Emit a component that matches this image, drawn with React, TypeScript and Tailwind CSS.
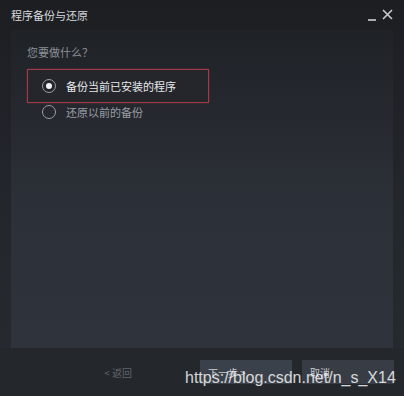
import React from 'react';

const font = { fontFamily: '"Noto Sans CJK SC", "Noto Sans", sans-serif' };

const Radio: React.FC<{ checked?: boolean }> = ({ checked }) => (
  <span className="flex h-[14px] w-[14px] shrink-0 items-center justify-center rounded-full border-[1.5px] border-[#9a9ea4]">
    {checked && <span className="h-[6px] w-[6px] rounded-full bg-[#f2f3f4]" />}
  </span>
);

const App: React.FC = () => {
  return (
    <div
      className="relative flex h-[396px] w-[404px] flex-col overflow-hidden bg-gradient-to-b from-[#1c1e22] via-[#23262b] to-[#272b31] text-[11px]"
      style={font}
    >
      <header className="flex h-[30px] shrink-0 items-center justify-between pl-[11px] pr-[11px]">
        <span className="text-[11px] text-[#d6d8da]">程序备份与还原</span>
        <div className="flex items-end gap-[6px] text-[#c4c7cb]">
          <span className="mb-[1px] h-[1.5px] w-[8px] bg-[#a9adb2]" />
          <svg width="11" height="11" viewBox="0 0 11 11" className="mb-[2px]">
            <path d="M1 1 L10 10 M10 1 L1 10" stroke="#c8cbcf" strokeWidth="1.6" />
          </svg>
        </div>
      </header>

      <main className="mx-[11px] flex flex-1 flex-col bg-gradient-to-b from-[#1f2227] via-[#2b2f36] to-[#2f343c] pl-[16px] pt-[14px]">
        <p className="leading-[16px] text-[#8d9197]">您要做什么？</p>
        <div className="mt-[9px] flex flex-col">
          <label className="flex h-[34px] w-[182px] items-center gap-[10px] border border-[#a33a48] bg-[#24262c] pl-[14px] text-[#e6e8ea] shadow-[0_0_2px_rgba(170,60,75,0.5)]">
            <Radio checked />
            <span>备份当前已安装的程序</span>
          </label>
          <label className="flex h-[18px] items-center gap-[10px] pl-[15px] text-[#9a9ea4]">
            <Radio />
            <span>还原以前的备份</span>
          </label>
        </div>
      </main>

      <footer className="flex h-[48px] shrink-0 items-start justify-end gap-[10px] bg-[#24272c] pr-[10px] pt-[12px]">
        <span className="mr-[58px] flex h-[24px] items-center text-[10px] text-[#60656c]">&lt; 返回</span>
        <button className="flex h-[24px] w-[92px] items-center bg-[#3b414a] pl-[8px] text-[10px] text-[#c9ccd0]">
          下一步 &gt;
        </button>
        <button className="flex h-[24px] w-[92px] items-center bg-[#373c45] pl-[8px] text-[10px] text-[#c9ccd0]">
          取消
        </button>
      </footer>

      <span
        className="pointer-events-none absolute left-[185px] top-[368px] text-[16px] leading-[20px] text-white/80"
        style={{ fontFamily: '"Liberation Sans", Arial, sans-serif' }}
      >
        https://blog.csdn.net/n_s_X14
      </span>
    </div>
  );
};

export default App;
